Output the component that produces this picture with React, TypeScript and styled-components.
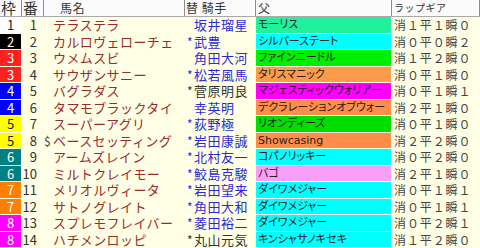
import React from "react";
import styled, { createGlobalStyle } from "styled-components";

const CREAM = "#FFFFE6";
const BLUE = "#2b2bd0";
const DARK = "#333333";

const GlobalStyle = createGlobalStyle`
  html, body { margin: 0; padding: 0; background: ${CREAM}; }
  body { font-family: "Noto Sans CJK JP", "Noto Sans", sans-serif; }
`;

const COLS = "22px 22px 141px 71px 136px 1fr";

const Table = styled.div`
  width: 480px;
  height: 248px;
  overflow: hidden;
  background: ${CREAM};
  display: flex;
  flex-direction: column;
`;

const HeaderRow = styled.div`
  display: grid;
  grid-template-columns: ${COLS};
  height: 16px;
  border-bottom: 1px solid #a8a8a8;
  background: #fbfbfb;
`;

const HeaderCell = styled.div<{ $pl: number; $size: number }>`
  border-right: 1px solid #8c8c8c;
  padding-left: ${(p) => p.$pl}px;
  font-size: ${(p) => p.$size}px;
  line-height: 16px;
  color: #333;
  white-space: nowrap;
  overflow: hidden;
  letter-spacing: 0.5px;
`;

const Row = styled.div`
  display: grid;
  grid-template-columns: ${COLS};
  height: 16.5px;
`;

const WakuCell = styled.div<{ $bg: string; $fg: string }>`
  background: ${(p) => p.$bg};
  color: ${(p) => p.$fg};
  margin-right: 1px;
  margin-bottom: 1px;
  text-align: center;
  font-size: 13px;
  line-height: 15.5px;
`;

const BanCell = styled.div`
  text-align: right;
  padding-right: 7px;
  color: ${DARK};
  font-size: 13px;
  line-height: 15.5px;
`;

const NameCell = styled.div`
  display: flex;
  white-space: nowrap;
  overflow: hidden;
  font-size: 13px;
  line-height: 15.5px;
  letter-spacing: 0.4px;
  color: #9b2a2a;
`;

const Prefix = styled.span<{ $w: number; $color: string }>`
  flex: 0 0 ${(p) => p.$w}px;
  color: ${(p) => p.$color};
  font-size: 12px;
  letter-spacing: 0;
`;

const JockeyCell = styled.div<{ $color: string }>`
  display: flex;
  padding-left: 2px;
  white-space: nowrap;
  overflow: hidden;
  font-size: 13px;
  line-height: 15.5px;
  letter-spacing: 0.5px;
  color: ${(p) => p.$color};
`;

const SireCell = styled.div<{ $bg: string }>`
  background: ${(p) => p.$bg};
  margin-right: 1px;
  margin-bottom: 1px;
  padding-left: 2px;
  font-family: "DejaVu Sans", "Noto Sans CJK JP", sans-serif;
  font-size: 11px;
  line-height: 15.5px;
  color: #222;
  white-space: nowrap;
  overflow: hidden;
  font-feature-settings: "palt";
`;

const LapCell = styled.div`
  padding-left: 2px;
  font-size: 12px;
  line-height: 15.5px;
  letter-spacing: 0.9px;
  color: #444;
  white-space: nowrap;
`;

const WAKU: Record<number, [string, string]> = {
  1: ["#ffffff", "#222"],
  2: ["#000000", "#fff"],
  3: ["#ff2020", "#fff"],
  4: ["#0000ff", "#fff"],
  5: ["#ffff00", "#222"],
  6: ["#008080", "#fff"],
  7: ["#ff8000", "#fff"],
  8: ["#ff00ff", "#fff"],
};

const CYAN = "#00ffff";
const ORANGE = "#ff8c48";

type Horse = {
  waku: number;
  ban: number;
  pre?: string;
  name: string;
  star: boolean;
  jockey: string;
  jc: string;
  sire: string;
  sc: string;
  lap: string;
};

const horses: Horse[] = [
  { waku: 1, ban: 1, name: "テラステラ", star: false, jockey: "坂井瑠星", jc: BLUE, sire: "モーリス", sc: "#22f09c", lap: "消１平１瞬０" },
  { waku: 2, ban: 2, name: "カルロヴェローチェ", star: true, jockey: "武豊", jc: BLUE, sire: "シルバーステート", sc: CYAN, lap: "消０平０瞬２" },
  { waku: 3, ban: 3, name: "ウメムスビ", star: false, jockey: "角田大河", jc: BLUE, sire: "ファインニードル", sc: "#00ee00", lap: "消１平２瞬０" },
  { waku: 3, ban: 4, name: "サウザンサニー", star: true, jockey: "松若風馬", jc: BLUE, sire: "タリスマニック", sc: "#ff9a4c", lap: "消０平１瞬０" },
  { waku: 4, ban: 5, name: "バグラダス", star: true, jockey: "菅原明良", jc: DARK, sire: "マジェスティックウォリアー", sc: "#ff00ff", lap: "消０平１瞬１" },
  { waku: 4, ban: 6, name: "タマモブラックタイ", star: false, jockey: "幸英明", jc: BLUE, sire: "デクラレーションオブウォー", sc: ORANGE, lap: "消２平１瞬０" },
  { waku: 5, ban: 7, name: "スーパーアグリ", star: true, jockey: "荻野極", jc: BLUE, sire: "リオンディーズ", sc: "#00dd00", lap: "消０平１瞬０" },
  { waku: 5, ban: 8, pre: "$", name: "ベースセッティング", star: true, jockey: "岩田康誠", jc: BLUE, sire: "Showcasing", sc: ORANGE, lap: "消２平２瞬０" },
  { waku: 6, ban: 9, name: "アームズレイン", star: true, jockey: "北村友一", jc: BLUE, sire: "コパノリッキー", sc: CYAN, lap: "消０平２瞬０" },
  { waku: 6, ban: 10, name: "ミルトクレイモー", star: true, jockey: "鮫島克駿", jc: BLUE, sire: "バゴ", sc: "#f8a0f8", lap: "消２平１瞬０" },
  { waku: 7, ban: 11, name: "メリオルヴィータ", star: true, jockey: "岩田望来", jc: BLUE, sire: "ダイワメジャー", sc: CYAN, lap: "消０平１瞬１" },
  { waku: 7, ban: 12, name: "サトノグレイト", star: true, jockey: "角田大和", jc: BLUE, sire: "ダイワメジャー", sc: CYAN, lap: "消０平１瞬１" },
  { waku: 8, ban: 13, name: "スプレモフレイバー", star: true, jockey: "菱田裕二", jc: BLUE, sire: "ダイワメジャー", sc: CYAN, lap: "消０平２瞬１" },
  { waku: 8, ban: 14, name: "ハチメンロッピ", star: true, jockey: "丸山元気", jc: DARK, sire: "キンシャサノキセキ", sc: CYAN, lap: "消１平２瞬０" },
];

export default function App() {
  return (
    <>
      <GlobalStyle />
      <Table>
        <HeaderRow>
          <HeaderCell $pl={1} $size={15}>枠</HeaderCell>
          <HeaderCell $pl={1} $size={15}>番</HeaderCell>
          <HeaderCell $pl={16} $size={12}>馬名</HeaderCell>
          <HeaderCell $pl={1} $size={12}>替&nbsp;騎手</HeaderCell>
          <HeaderCell $pl={2} $size={12}>父</HeaderCell>
          <HeaderCell $pl={2} $size={10}>ラップギア</HeaderCell>
        </HeaderRow>
        {horses.map((h) => {
          const [bg, fg] = WAKU[h.waku];
          return (
            <Row key={h.ban}>
              <WakuCell $bg={bg} $fg={fg}>{h.waku}</WakuCell>
              <BanCell>{h.ban}</BanCell>
              <NameCell>
                <Prefix $w={9} $color="#444">{h.pre ?? ""}</Prefix>
                {h.name}
              </NameCell>
              <JockeyCell $color={h.jc}>
                <Prefix $w={7} $color={h.jc}>{h.star ? "*" : ""}</Prefix>
                {h.jockey}
              </JockeyCell>
              <SireCell $bg={h.sc}>{h.sire}</SireCell>
              <LapCell>{h.lap}</LapCell>
            </Row>
          );
        })}
      </Table>
    </>
  );
}
